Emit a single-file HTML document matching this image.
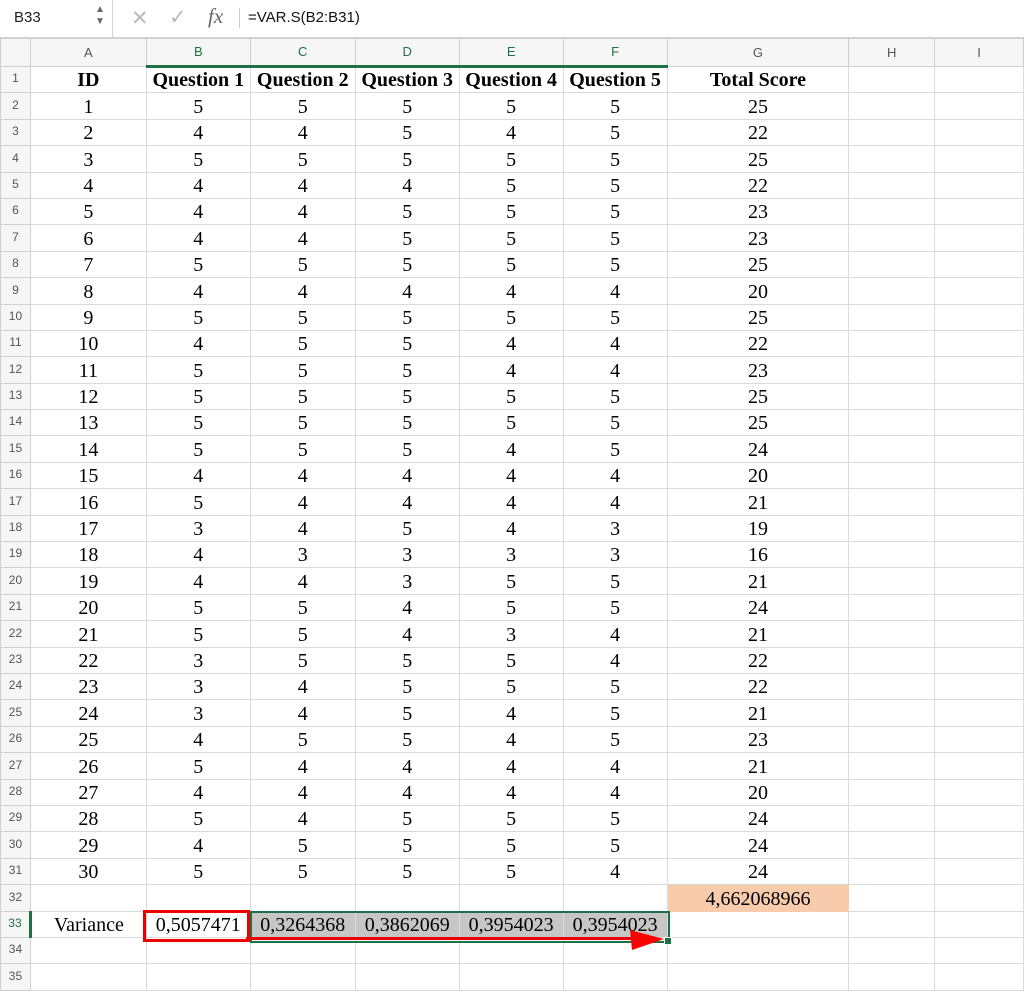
<!DOCTYPE html>
<html><head><meta charset="utf-8"><style>
body{margin:0;width:1024px;height:988px;overflow:hidden;background:#fff;position:relative;font-family:"Liberation Serif",serif}
#fb{position:absolute;left:0;top:0;width:1024px;height:37px;border-bottom:1px solid #d4d4d4;background:#fff;font-family:"Liberation Sans",sans-serif}
table{position:absolute;left:0;top:38px;border-collapse:collapse;table-layout:fixed}
td{border:1px solid #dadada;padding:0;text-align:center;font-size:20px;line-height:20px;vertical-align:bottom;padding-bottom:2px;white-space:nowrap;overflow:visible;color:#000}
tr{height:26.4px}
tr.h{height:28px}
tr.h td{font-family:"Liberation Sans",sans-serif;font-size:13px;color:#555;vertical-align:middle;padding:0;background:#f6f6f6;border-color:#d0d0d0}
tr.h td.g{color:#1e7145}
td.r{font-family:"Liberation Sans",sans-serif;font-size:12px;color:#555;vertical-align:bottom;padding:0 0 4px 0;text-align:center;background:#f6f6f6;border-color:#d0d0d0}
tr.b td{font-weight:bold}
.gr{background:#c6c6c6}
</style></head><body>
<div id="fb">
<div style="position:absolute;left:0;top:0;width:112px;height:37px;border-right:1px solid #d4d4d4"></div>
<div style="position:absolute;left:14px;top:9px;font-size:15px;color:#222">B33</div>
<div style="position:absolute;left:95px;top:4px;font-size:10px;color:#666;line-height:12px">▲<br>▼</div>
<div style="position:absolute;left:131px;top:6px;font-size:21px;color:#bbb">✕</div>
<div style="position:absolute;left:169px;top:5px;font-size:21px;color:#bbb">✓</div>
<div style="position:absolute;left:208px;top:4px;font-size:21px;color:#666;font-family:'Liberation Serif',serif;font-style:italic">fx</div>
<div style="position:absolute;left:239px;top:8px;width:1px;height:20px;background:#ccc"></div>
<div style="position:absolute;left:248px;top:9px;font-size:15px;color:#111">=VAR.S(B2:B31)</div>
</div>
<table>
<colgroup><col style="width:30px"><col style="width:116px"><col style="width:104px"><col style="width:105px"><col style="width:104px"><col style="width:104px"><col style="width:104px"><col style="width:182px"><col style="width:86px"><col style="width:89px"></colgroup>
<tr class="h"><td></td><td>A</td><td class="g" style="border-bottom:3px solid #1e7145">B</td><td class="g" style="border-bottom:3px solid #1e7145">C</td><td class="g" style="border-bottom:3px solid #1e7145">D</td><td class="g" style="border-bottom:3px solid #1e7145">E</td><td class="g" style="border-bottom:3px solid #1e7145">F</td><td>G</td><td>H</td><td>I</td></tr>
<tr class="b"><td class="r" style="font-weight:normal">1</td><td>ID</td><td>Question 1</td><td>Question 2</td><td>Question 3</td><td>Question 4</td><td>Question 5</td><td>Total Score</td><td></td><td></td></tr>
<tr><td class="r">2</td><td>1</td><td>5</td><td>5</td><td>5</td><td>5</td><td>5</td><td>25</td><td></td><td></td></tr>
<tr><td class="r">3</td><td>2</td><td>4</td><td>4</td><td>5</td><td>4</td><td>5</td><td>22</td><td></td><td></td></tr>
<tr><td class="r">4</td><td>3</td><td>5</td><td>5</td><td>5</td><td>5</td><td>5</td><td>25</td><td></td><td></td></tr>
<tr><td class="r">5</td><td>4</td><td>4</td><td>4</td><td>4</td><td>5</td><td>5</td><td>22</td><td></td><td></td></tr>
<tr><td class="r">6</td><td>5</td><td>4</td><td>4</td><td>5</td><td>5</td><td>5</td><td>23</td><td></td><td></td></tr>
<tr><td class="r">7</td><td>6</td><td>4</td><td>4</td><td>5</td><td>5</td><td>5</td><td>23</td><td></td><td></td></tr>
<tr><td class="r">8</td><td>7</td><td>5</td><td>5</td><td>5</td><td>5</td><td>5</td><td>25</td><td></td><td></td></tr>
<tr><td class="r">9</td><td>8</td><td>4</td><td>4</td><td>4</td><td>4</td><td>4</td><td>20</td><td></td><td></td></tr>
<tr><td class="r">10</td><td>9</td><td>5</td><td>5</td><td>5</td><td>5</td><td>5</td><td>25</td><td></td><td></td></tr>
<tr><td class="r">11</td><td>10</td><td>4</td><td>5</td><td>5</td><td>4</td><td>4</td><td>22</td><td></td><td></td></tr>
<tr><td class="r">12</td><td>11</td><td>5</td><td>5</td><td>5</td><td>4</td><td>4</td><td>23</td><td></td><td></td></tr>
<tr><td class="r">13</td><td>12</td><td>5</td><td>5</td><td>5</td><td>5</td><td>5</td><td>25</td><td></td><td></td></tr>
<tr><td class="r">14</td><td>13</td><td>5</td><td>5</td><td>5</td><td>5</td><td>5</td><td>25</td><td></td><td></td></tr>
<tr><td class="r">15</td><td>14</td><td>5</td><td>5</td><td>5</td><td>4</td><td>5</td><td>24</td><td></td><td></td></tr>
<tr><td class="r">16</td><td>15</td><td>4</td><td>4</td><td>4</td><td>4</td><td>4</td><td>20</td><td></td><td></td></tr>
<tr><td class="r">17</td><td>16</td><td>5</td><td>4</td><td>4</td><td>4</td><td>4</td><td>21</td><td></td><td></td></tr>
<tr><td class="r">18</td><td>17</td><td>3</td><td>4</td><td>5</td><td>4</td><td>3</td><td>19</td><td></td><td></td></tr>
<tr><td class="r">19</td><td>18</td><td>4</td><td>3</td><td>3</td><td>3</td><td>3</td><td>16</td><td></td><td></td></tr>
<tr><td class="r">20</td><td>19</td><td>4</td><td>4</td><td>3</td><td>5</td><td>5</td><td>21</td><td></td><td></td></tr>
<tr><td class="r">21</td><td>20</td><td>5</td><td>5</td><td>4</td><td>5</td><td>5</td><td>24</td><td></td><td></td></tr>
<tr><td class="r">22</td><td>21</td><td>5</td><td>5</td><td>4</td><td>3</td><td>4</td><td>21</td><td></td><td></td></tr>
<tr><td class="r">23</td><td>22</td><td>3</td><td>5</td><td>5</td><td>5</td><td>4</td><td>22</td><td></td><td></td></tr>
<tr><td class="r">24</td><td>23</td><td>3</td><td>4</td><td>5</td><td>5</td><td>5</td><td>22</td><td></td><td></td></tr>
<tr><td class="r">25</td><td>24</td><td>3</td><td>4</td><td>5</td><td>4</td><td>5</td><td>21</td><td></td><td></td></tr>
<tr><td class="r">26</td><td>25</td><td>4</td><td>5</td><td>5</td><td>4</td><td>5</td><td>23</td><td></td><td></td></tr>
<tr><td class="r">27</td><td>26</td><td>5</td><td>4</td><td>4</td><td>4</td><td>4</td><td>21</td><td></td><td></td></tr>
<tr><td class="r">28</td><td>27</td><td>4</td><td>4</td><td>4</td><td>4</td><td>4</td><td>20</td><td></td><td></td></tr>
<tr><td class="r">29</td><td>28</td><td>5</td><td>4</td><td>5</td><td>5</td><td>5</td><td>24</td><td></td><td></td></tr>
<tr><td class="r">30</td><td>29</td><td>4</td><td>5</td><td>5</td><td>5</td><td>5</td><td>24</td><td></td><td></td></tr>
<tr><td class="r">31</td><td>30</td><td>5</td><td>5</td><td>5</td><td>5</td><td>4</td><td>24</td><td></td><td></td></tr>
<tr><td class="r">32</td><td></td><td></td><td></td><td></td><td></td><td></td><td style="background:#f8cbad;border-color:#f8cbad">4,662068966</td><td></td><td></td></tr>
<tr><td class="r" style="color:#1e7145;border-right:3px solid #1e7145">33</td><td>Variance</td><td>0,5057471</td><td class="gr">0,3264368</td><td class="gr">0,3862069</td><td class="gr">0,3954023</td><td class="gr">0,3954023</td><td></td><td></td><td></td></tr>
<tr><td class="r">34</td><td></td><td></td><td></td><td></td><td></td><td></td><td></td><td></td><td></td></tr>
<tr><td class="r">35</td><td></td><td></td><td></td><td></td><td></td><td></td><td></td><td></td><td></td></tr>
</table>
<div style="position:absolute;left:250px;top:911px;width:416px;height:28px;border:2px solid #1e7145"></div>
<div style="position:absolute;left:664px;top:937px;width:6px;height:6px;background:#1e7145;border:1px solid #fff"></div>
<div style="position:absolute;left:143px;top:910px;width:101px;height:26px;border:3px solid #e00"></div>
<div style="position:absolute;left:246px;top:937px;width:390px;height:3px;background:#e00"></div>
<svg style="position:absolute;left:630px;top:928px" width="36" height="24"><polygon points="0,2 34,11 2,22" fill="#f00"/></svg>
</body></html>
